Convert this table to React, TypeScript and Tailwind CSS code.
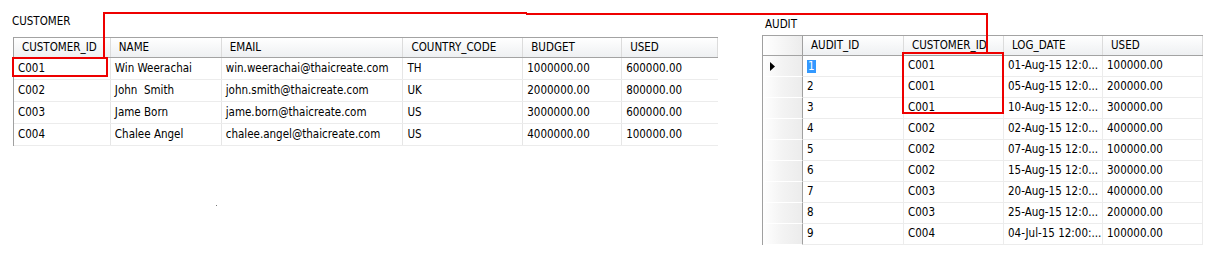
const customerCols = [
  { key: 'id', label: 'CUSTOMER_ID', w: 'w-[97px]' },
  { key: 'name', label: 'NAME', w: 'w-[111px]' },
  { key: 'email', label: 'EMAIL', w: 'w-[182px]' },
  { key: 'country', label: 'COUNTRY_CODE', w: 'w-[120px]' },
  { key: 'budget', label: 'BUDGET', w: 'w-[99px]' },
  { key: 'used', label: 'USED', w: 'w-[96px]' },
];

const customers = [
  ['C001', 'Win Weerachai', 'win.weerachai@thaicreate.com', 'TH', '1000000.00', '600000.00'],
  ['C002', 'John  Smith', 'john.smith@thaicreate.com', 'UK', '2000000.00', '800000.00'],
  ['C003', 'Jame Born', 'jame.born@thaicreate.com', 'US', '3000000.00', '600000.00'],
  ['C004', 'Chalee Angel', 'chalee.angel@thaicreate.com', 'US', '4000000.00', '100000.00'],
];

const auditCols = [
  { label: 'AUDIT_ID', w: 'w-[101px]' },
  { label: 'CUSTOMER_ID', w: 'w-[100px]' },
  { label: 'LOG_DATE', w: 'w-[99px]' },
  { label: 'USED', w: 'w-[100px]' },
];

const audits = [
  ['1', 'C001', '01-Aug-15 12:0...', '100000.00'],
  ['2', 'C001', '05-Aug-15 12:0...', '200000.00'],
  ['3', 'C001', '10-Aug-15 12:0...', '300000.00'],
  ['4', 'C002', '02-Aug-15 12:0...', '400000.00'],
  ['5', 'C002', '07-Aug-15 12:0...', '100000.00'],
  ['6', 'C002', '15-Aug-15 12:0...', '300000.00'],
  ['7', 'C003', '20-Aug-15 12:0...', '400000.00'],
  ['8', 'C003', '25-Aug-15 12:0...', '200000.00'],
  ['9', 'C004', '04-Jul-15 12:00:...', '100000.00'],
];

function CustomerTable() {
  return (
    <div className="border-l border-[#a0a0a0]">
      <div className="flex h-[21px] border-y border-[#a3a3a3] bg-linear-to-b from-white to-[#eef0f2]">
        {customerCols.map((c) => (
          <div
            key={c.key}
            className={`${c.w} flex items-center pl-[8px] pt-px border-r border-[#dcdcdc] whitespace-pre`}
          >
            {c.label}
          </div>
        ))}
      </div>
      {customers.map((row) => (
        <div key={row[0]} className="flex h-[22px] border-b border-[#ececec]">
          {row.map((cell, i) => (
            <div
              key={i}
              className={`${customerCols[i].w} flex items-center pl-[4px] whitespace-pre ${
                i < row.length - 1 ? 'border-r border-[#e6e6e6]' : ''
              }`}
            >
              {cell}
            </div>
          ))}
        </div>
      ))}
    </div>
  );
}

function AuditTable() {
  return (
    <div className="border-l border-[#a0a0a0]">
      <div className="flex h-[21px] border-y border-[#a3a3a3]">
        <div className="w-[40px] border-r border-[#a0a0a0] bg-linear-to-r from-white to-[#ececec]" />
        {auditCols.map((c) => (
          <div
            key={c.label}
            className={`${c.w} flex items-center pl-[8px] pt-px border-r border-[#dcdcdc] bg-linear-to-b from-white to-[#eef0f2] whitespace-pre`}
          >
            {c.label}
          </div>
        ))}
      </div>
      {audits.map((row, r) => (
        <div key={row[0]} className="flex h-[21px]">
          <div className="w-[40px] flex items-center pl-[7px] border-r border-b border-r-[#a0a0a0] border-b-white bg-linear-to-r from-white via-[#f3f3f3] to-[#ececec]">
            {r === 0 && (
              <svg width="5" height="9" viewBox="0 0 5 9">
                <path d="M0 0 L5 4.5 L0 9 Z" fill="#000" />
              </svg>
            )}
          </div>
          {row.map((cell, i) => (
            <div
              key={i}
              className={`${auditCols[i].w} flex items-center pl-[4px] border-r border-b border-[#ececec] whitespace-pre overflow-hidden`}
            >
              {r === 0 && i === 0 ? (
                <span className="bg-[#3399ff] text-white px-px leading-[13px]">{cell}</span>
              ) : (
                cell
              )}
            </div>
          ))}
        </div>
      ))}
    </div>
  );
}

export default function App() {
  return (
    <div className="relative w-[1210px] h-[256px] overflow-hidden bg-white text-[11.5px] text-black font-['DejaVu_Sans_Condensed','Liberation_Sans',sans-serif]">
      <div className="flex">
        <div className="ml-[13px] w-[705px] pt-[15px]">
          <div className="-ml-px h-[13px] leading-[13px]">CUSTOMER</div>
          <div className="mt-[9px]">
            <CustomerTable />
          </div>
        </div>
        <div className="ml-[44px] w-[441px] pt-[18px]">
          <div className="pl-[3px] h-[13px] leading-[13px]">AUDIT</div>
          <div className="mt-[4px]">
            <AuditTable />
          </div>
        </div>
      </div>

      <div className="absolute left-[216px] top-[205px] w-px h-px bg-[#777]" />

      <svg
        className="absolute inset-0 pointer-events-none"
        width="1210"
        height="256"
        shapeRendering="crispEdges"
      >
        <g fill="#ee0000">
          <rect x="103" y="12" width="2" height="45" />
          <rect x="103" y="12" width="424" height="2" />
          <rect x="526" y="13" width="462" height="2" />
          <rect x="986" y="13" width="2" height="40" />
          <rect x="12" y="57" width="96" height="2" />
          <rect x="12" y="75" width="96" height="2" />
          <rect x="12" y="57" width="2" height="20" />
          <rect x="106" y="57" width="2" height="20" />
          <rect x="902" y="52" width="102" height="2" />
          <rect x="902" y="112" width="102" height="2" />
          <rect x="902" y="52" width="2" height="62" />
          <rect x="1002" y="52" width="2" height="62" />
        </g>
      </svg>
    </div>
  );
}
